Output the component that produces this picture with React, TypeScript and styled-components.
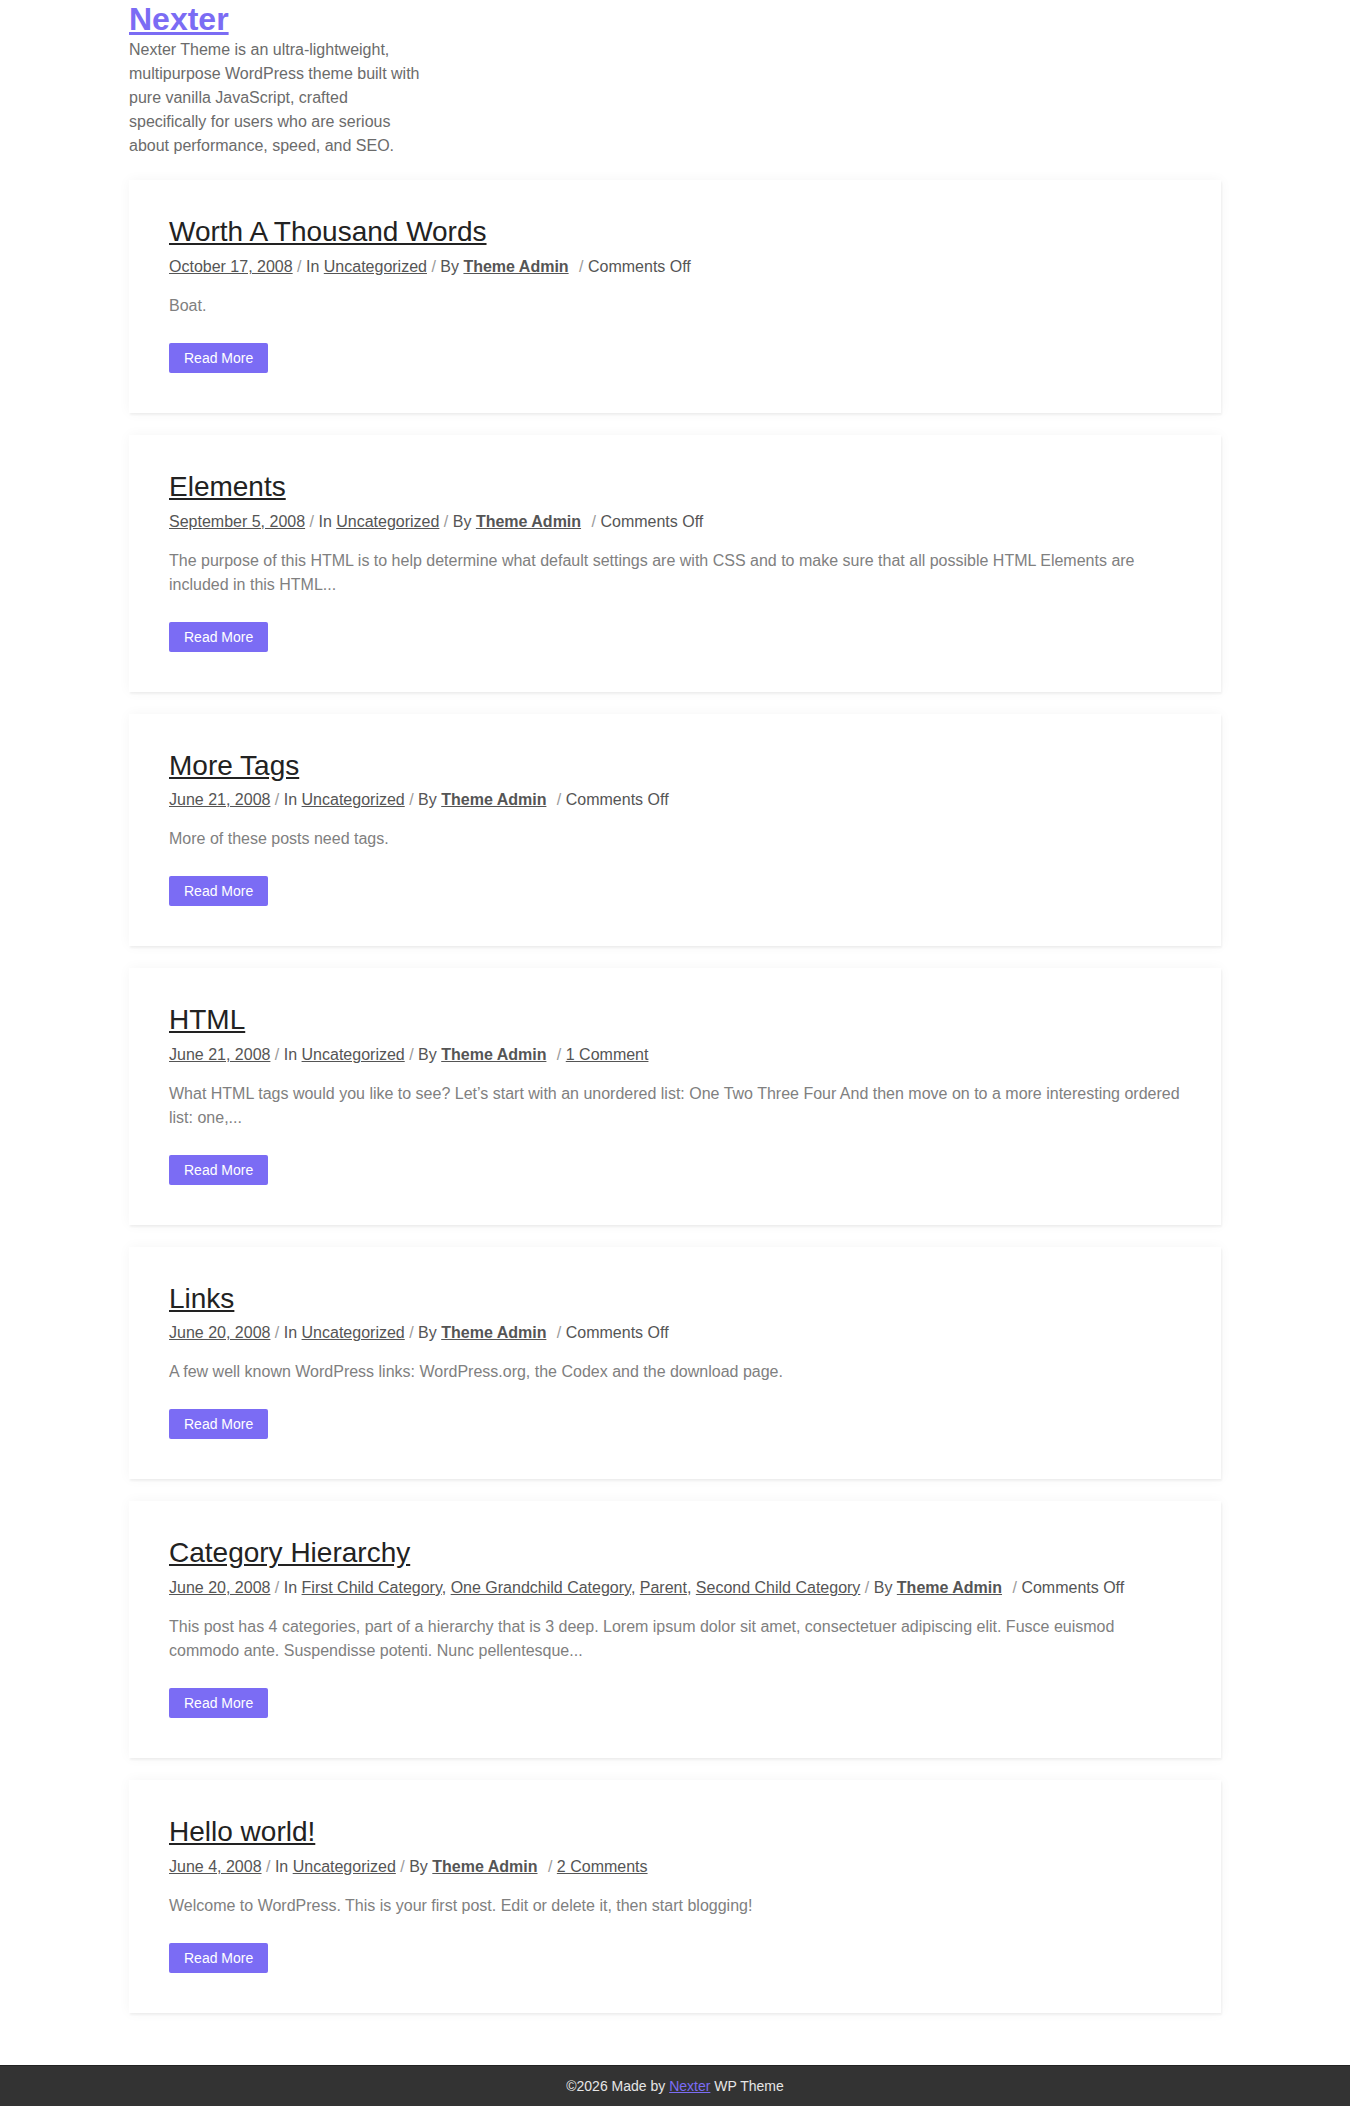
import React from "react";
import styled, { createGlobalStyle } from "styled-components";

const GlobalStyle = createGlobalStyle`
  html, body {
    margin: 0;
    padding: 0;
    background: #ffffff;
  }
  body {
    font-family: "Liberation Sans", Arial, Helvetica, sans-serif;
    color: #555555;
    -webkit-font-smoothing: antialiased;
  }
  * { box-sizing: border-box; }
`;

const Page = styled.div`
  display: flex;
  flex-direction: column;
  min-height: 100vh;
`;

const Container = styled.main`
  width: 1092px;
  margin: 0 auto;
  padding-bottom: 50px;
  display: flex;
  flex-direction: column;
  gap: 22px;
  flex: 1;
`;

const SiteHeader = styled.header`
  display: flex;
  flex-direction: column;
  width: 295px;
`;

const SiteTitle = styled.h1`
  margin: 0;
  font-size: 32px;
  line-height: 1.2;
  font-weight: 700;
  a {
    color: #7b6cf4;
    text-decoration: underline;
  }
`;

const SiteDescription = styled.p`
  margin: 0;
  font-size: 16px;
  line-height: 24px;
  color: #6b6b6b;
`;

const Card = styled.article`
  background: #ffffff;
  padding: 35px 40px 40px;
  box-shadow: 1px 2px 2px rgba(0, 0, 0, 0.05), 0 0 12px rgba(0, 0, 0, 0.045);
  display: flex;
  flex-direction: column;
  align-items: flex-start;
`;

const PostTitle = styled.h2`
  margin: 0 0 6px;
  font-size: 28px;
  line-height: 1.2;
  font-weight: 400;
  a {
    color: #222222;
    text-decoration: underline;
    text-underline-offset: 2px;
  }
`;

const Meta = styled.div`
  font-size: 16px;
  line-height: 24px;
  color: #555555;
  margin-bottom: 15px;
  a {
    color: #555555;
    text-decoration: underline;
  }
`;

const Sep = styled.span<{ $wide?: boolean }>`
  color: #9a9a9a;
  margin-left: ${(p) => (p.$wide ? "6px" : "0")};
`;

const Author = styled.a`
  font-weight: 700;
`;

const Excerpt = styled.p`
  margin: 0 0 25px;
  font-size: 16px;
  line-height: 24px;
  color: #808080;
`;

const ReadMore = styled.a`
  display: inline-block;
  height: 30px;
  line-height: 30px;
  padding: 0 15px;
  background: #7b6cf4;
  color: #ffffff;
  font-size: 14px;
  border-radius: 2px;
  text-decoration: none;
`;

const Footer = styled.footer`
  background: #333333;
  border-top: 1px solid #222222;
  padding: 12px 0;
  text-align: center;
  font-size: 14px;
  line-height: 16px;
  color: #e6e6e6;
  a {
    color: #7b6cf4;
    text-decoration: underline;
  }
`;

type Post = {
  title: string;
  date: string;
  cats: string[];
  comments: string;
  commentsLink?: boolean;
  excerpt: string;
};

const posts: Post[] = [
  {
    title: "Worth A Thousand Words",
    date: "October 17, 2008",
    cats: ["Uncategorized"],
    comments: "Comments Off",
    excerpt: "Boat.",
  },
  {
    title: "Elements",
    date: "September 5, 2008",
    cats: ["Uncategorized"],
    comments: "Comments Off",
    excerpt:
      "The purpose of this HTML is to help determine what default settings are with CSS and to make sure that all possible HTML Elements are included in this HTML...",
  },
  {
    title: "More Tags",
    date: "June 21, 2008",
    cats: ["Uncategorized"],
    comments: "Comments Off",
    excerpt: "More of these posts need tags.",
  },
  {
    title: "HTML",
    date: "June 21, 2008",
    cats: ["Uncategorized"],
    comments: "1 Comment",
    commentsLink: true,
    excerpt:
      "What HTML tags would you like to see? Let\u2019s start with an unordered list: One Two Three Four And then move on to a more interesting ordered list: one,...",
  },
  {
    title: "Links",
    date: "June 20, 2008",
    cats: ["Uncategorized"],
    comments: "Comments Off",
    excerpt:
      "A few well known WordPress links: WordPress.org, the Codex and the download page.",
  },
  {
    title: "Category Hierarchy",
    date: "June 20, 2008",
    cats: [
      "First Child Category",
      "One Grandchild Category",
      "Parent",
      "Second Child Category",
    ],
    comments: "Comments Off",
    excerpt:
      "This post has 4 categories, part of a hierarchy that is 3 deep. Lorem ipsum dolor sit amet, consectetuer adipiscing elit. Fusce euismod commodo ante. Suspendisse potenti. Nunc pellentesque...",
  },
  {
    title: "Hello world!",
    date: "June 4, 2008",
    cats: ["Uncategorized"],
    comments: "2 Comments",
    commentsLink: true,
    excerpt:
      "Welcome to WordPress. This is your first post. Edit or delete it, then start blogging!",
  },
];

function PostCard({ post }: { post: Post }) {
  return (
    <Card>
      <PostTitle>
        <a href="#">{post.title}</a>
      </PostTitle>
      <Meta>
        <a href="#">{post.date}</a>
        <Sep> / </Sep>In{" "}
        {post.cats.map((c, i) => (
          <React.Fragment key={c}>
            <a href="#">{c}</a>
            {i < post.cats.length - 1 ? ", " : ""}
          </React.Fragment>
        ))}
        <Sep> / </Sep>By <Author href="#">Theme Admin</Author>
        <Sep $wide> / </Sep>
        {post.commentsLink ? <a href="#">{post.comments}</a> : post.comments}
      </Meta>
      <Excerpt>{post.excerpt}</Excerpt>
      <ReadMore href="#">Read More</ReadMore>
    </Card>
  );
}

export default function App() {
  return (
    <>
      <GlobalStyle />
      <Page>
        <Container>
          <SiteHeader>
            <SiteTitle>
              <a href="#">Nexter</a>
            </SiteTitle>
            <SiteDescription>
              Nexter Theme is an ultra-lightweight, multipurpose WordPress theme
              built with pure vanilla JavaScript, crafted specifically for users
              who are serious about performance, speed, and SEO.
            </SiteDescription>
          </SiteHeader>
          {posts.map((p) => (
            <PostCard key={p.title} post={p} />
          ))}
        </Container>
        <Footer>
          ©2026 Made by <a href="#">Nexter</a> WP Theme
        </Footer>
      </Page>
    </>
  );
}
